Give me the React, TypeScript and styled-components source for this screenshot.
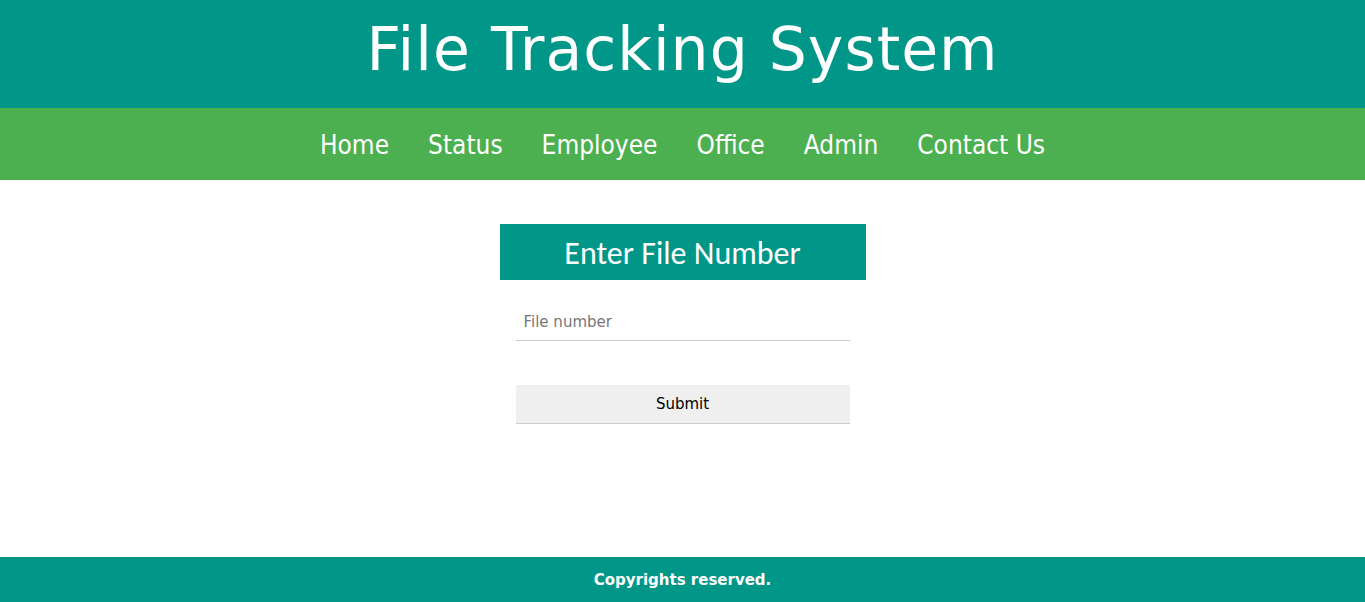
import React from "react";
import styled, { createGlobalStyle } from "styled-components";

const Global = createGlobalStyle`
  html, body { margin: 0; padding: 0; background: #fff; }
  * { box-sizing: border-box; }
`;

const Page = styled.div`
  min-height: 100vh;
  display: flex;
  flex-direction: column;
`;

const Header = styled.header`
  height: 108px;
  background: #009688;
  display: flex;
  align-items: center;
  justify-content: center;
`;

const Title = styled.h1`
  margin: 0;
  color: #fff;
  font-family: "Comic Sans MS", "DejaVu Sans", sans-serif;
  font-weight: normal;
  font-size: 60px;
  letter-spacing: 1px;
  line-height: 1;
  padding-bottom: 10px;
`;

const Nav = styled.nav`
  height: 72px;
  background: #4caf50;
  display: flex;
  align-items: center;
  justify-content: center;
  gap: 39px;
`;

const NavLink = styled.a`
  color: #fff;
  font-family: Tahoma, "DejaVu Sans Condensed", "DejaVu Sans", sans-serif;
  font-size: 26px;
  text-decoration: none;
  line-height: 1;
  padding-top: 2px;
`;

const Main = styled.main`
  flex: 1;
  display: flex;
  flex-direction: column;
  align-items: center;
  padding-top: 44px;
`;

const Card = styled.div`
  width: 366px;
  display: flex;
  flex-direction: column;
  align-items: center;
`;

const CardHeader = styled.div`
  width: 100%;
  height: 56px;
  background: #009688;
  color: #fff;
  font-family: Calibri, Lato, "Open Sans", sans-serif;
  font-size: 32px;
  padding-top: 2px;
  display: flex;
  align-items: center;
  justify-content: center;
`;

const Input = styled.input`
  margin-top: 23px;
  width: 334px;
  height: 38px;
  border: none;
  border-bottom: 1px solid #ccc;
  padding: 0 8px;
  font-family: Verdana, "DejaVu Sans", sans-serif;
  font-size: 15px;
  outline: none;
  color: #333;
  &::placeholder { color: #777; }
`;

const Button = styled.button`
  margin-top: 44px;
  width: 334px;
  height: 39px;
  border: none;
  border-bottom: 1px solid #ccc;
  background: #efefef;
  font-family: Verdana, "DejaVu Sans", sans-serif;
  font-size: 15px;
  color: #000;
`;

const Footer = styled.footer`
  height: 45px;
  background: #009688;
  display: flex;
  align-items: center;
  justify-content: center;
  color: #fff;
  font-family: "Comic Sans MS", "DejaVu Sans", sans-serif;
  font-size: 15px;
  font-weight: bold;
`;

export default function App() {
  return (
    <Page>
      <Global />
      <Header>
        <Title>File Tracking System</Title>
      </Header>
      <Nav>
        {["Home", "Status", "Employee", "Office", "Admin", "Contact Us"].map((t) => (
          <NavLink key={t} href="#">{t}</NavLink>
        ))}
      </Nav>
      <Main>
        <Card>
          <CardHeader>Enter File Number</CardHeader>
          <Input placeholder="File number" />
          <Button>Submit</Button>
        </Card>
      </Main>
      <Footer>Copyrights reserved.</Footer>
    </Page>
  );
}
